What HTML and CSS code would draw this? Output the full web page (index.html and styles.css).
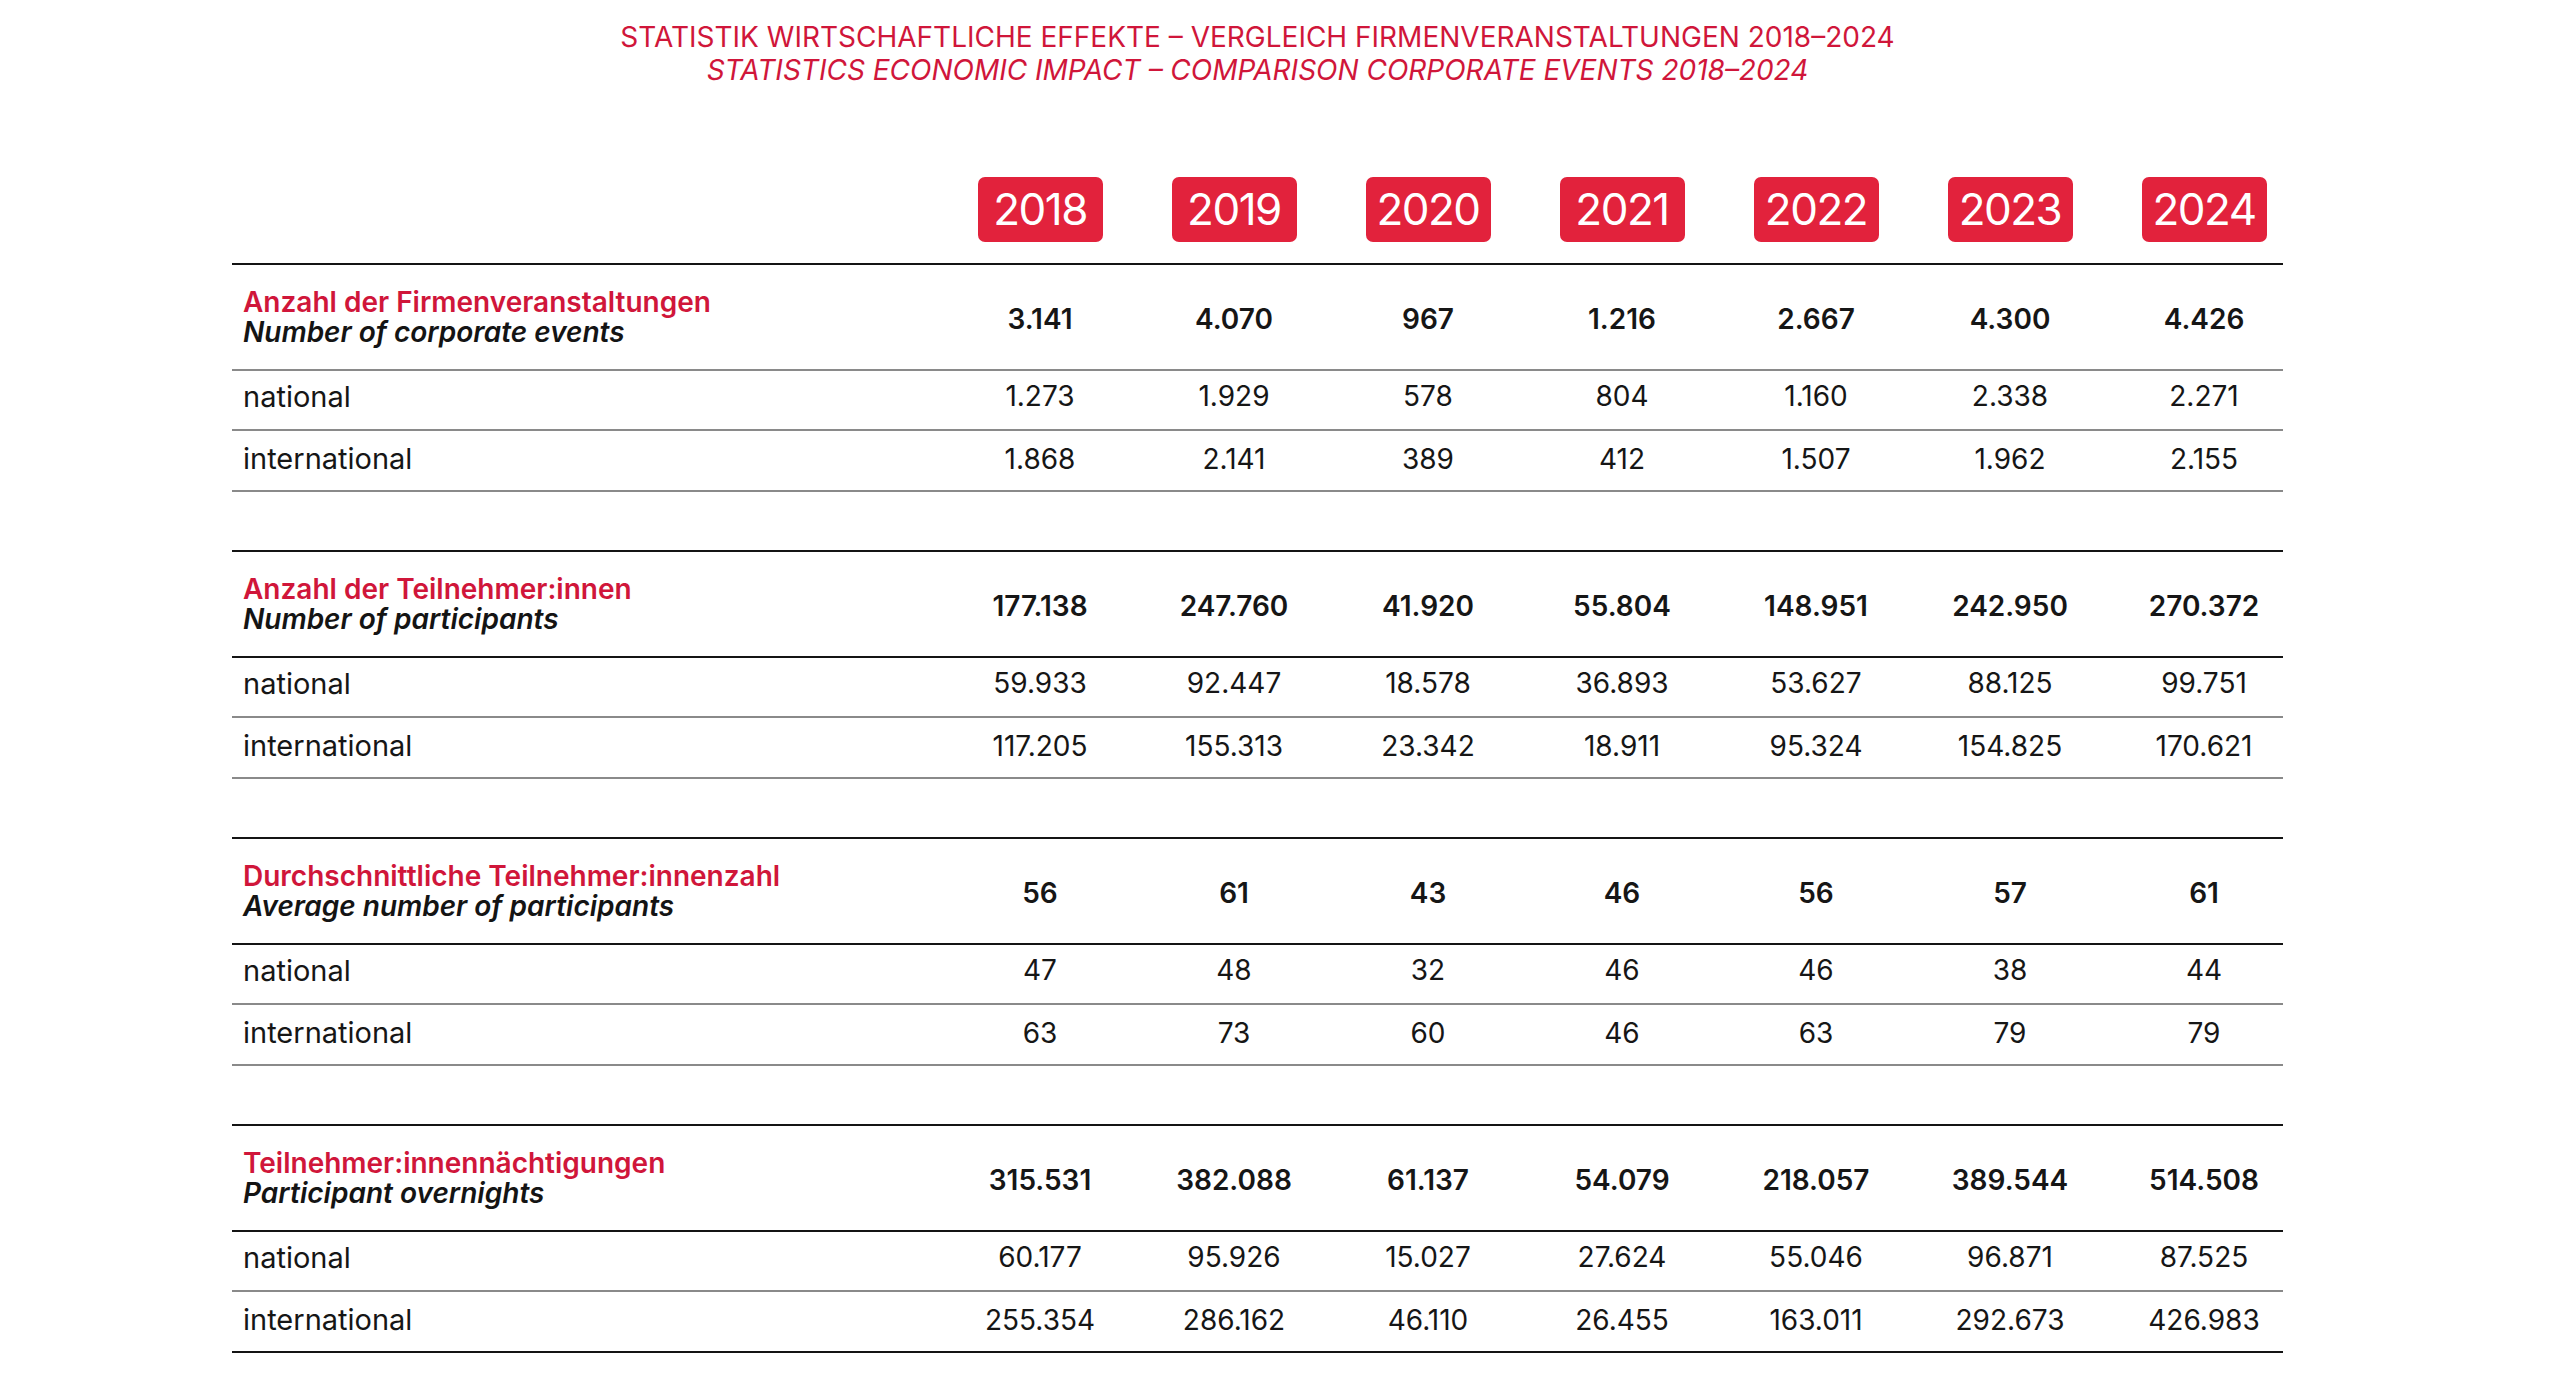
FILE: index.html
```html
<!DOCTYPE html>
<html lang="de">
<head>
<meta charset="utf-8">
<title>Statistik wirtschaftliche Effekte</title>
<link rel="stylesheet" href="styles.css">
</head>
<body>
<div class="page">
  <header class="title">
    <div class="title-de">STATISTIK WIRTSCHAFTLICHE EFFEKTE – VERGLEICH FIRMENVERANSTALTUNGEN 2018–2024</div>
    <div class="title-en">STATISTICS ECONOMIC IMPACT – COMPARISON CORPORATE EVENTS 2018–2024</div>
  </header>

  <div class="grid years">
    <div></div>
    <div class="cell"><span class="badge">2018</span></div>
    <div class="cell"><span class="badge">2019</span></div>
    <div class="cell"><span class="badge">2020</span></div>
    <div class="cell"><span class="badge">2021</span></div>
    <div class="cell"><span class="badge">2022</span></div>
    <div class="cell"><span class="badge">2023</span></div>
    <div class="cell"><span class="badge">2024</span></div>
  </div>

  <section class="section first">
    <div class="grid row-head soft">
      <div class="label"><div class="de">Anzahl der Firmenveranstaltungen</div><div class="en">Number of corporate events</div></div>
      <div class="num">3.141</div><div class="num">4.070</div><div class="num">967</div><div class="num">1.216</div><div class="num">2.667</div><div class="num">4.300</div><div class="num">4.426</div>
    </div>
    <div class="grid row nat">
      <div class="label">national</div>
      <div class="num">1.273</div><div class="num">1.929</div><div class="num">578</div><div class="num">804</div><div class="num">1.160</div><div class="num">2.338</div><div class="num">2.271</div>
    </div>
    <div class="grid row intl">
      <div class="label">international</div>
      <div class="num">1.868</div><div class="num">2.141</div><div class="num">389</div><div class="num">412</div><div class="num">1.507</div><div class="num">1.962</div><div class="num">2.155</div>
    </div>
  </section>

  <section class="section">
    <div class="grid row-head">
      <div class="label"><div class="de">Anzahl der Teilnehmer:innen</div><div class="en">Number of participants</div></div>
      <div class="num">177.138</div><div class="num">247.760</div><div class="num">41.920</div><div class="num">55.804</div><div class="num">148.951</div><div class="num">242.950</div><div class="num">270.372</div>
    </div>
    <div class="grid row nat">
      <div class="label">national</div>
      <div class="num">59.933</div><div class="num">92.447</div><div class="num">18.578</div><div class="num">36.893</div><div class="num">53.627</div><div class="num">88.125</div><div class="num">99.751</div>
    </div>
    <div class="grid row intl">
      <div class="label">international</div>
      <div class="num">117.205</div><div class="num">155.313</div><div class="num">23.342</div><div class="num">18.911</div><div class="num">95.324</div><div class="num">154.825</div><div class="num">170.621</div>
    </div>
  </section>

  <section class="section">
    <div class="grid row-head">
      <div class="label"><div class="de">Durchschnittliche Teilnehmer:innenzahl</div><div class="en">Average number of participants</div></div>
      <div class="num">56</div><div class="num">61</div><div class="num">43</div><div class="num">46</div><div class="num">56</div><div class="num">57</div><div class="num">61</div>
    </div>
    <div class="grid row nat">
      <div class="label">national</div>
      <div class="num">47</div><div class="num">48</div><div class="num">32</div><div class="num">46</div><div class="num">46</div><div class="num">38</div><div class="num">44</div>
    </div>
    <div class="grid row intl">
      <div class="label">international</div>
      <div class="num">63</div><div class="num">73</div><div class="num">60</div><div class="num">46</div><div class="num">63</div><div class="num">79</div><div class="num">79</div>
    </div>
  </section>

  <section class="section last">
    <div class="grid row-head">
      <div class="label"><div class="de">Teilnehmer:innennächtigungen</div><div class="en">Participant overnights</div></div>
      <div class="num">315.531</div><div class="num">382.088</div><div class="num">61.137</div><div class="num">54.079</div><div class="num">218.057</div><div class="num">389.544</div><div class="num">514.508</div>
    </div>
    <div class="grid row nat">
      <div class="label">national</div>
      <div class="num">60.177</div><div class="num">95.926</div><div class="num">15.027</div><div class="num">27.624</div><div class="num">55.046</div><div class="num">96.871</div><div class="num">87.525</div>
    </div>
    <div class="grid row intl">
      <div class="label">international</div>
      <div class="num">255.354</div><div class="num">286.162</div><div class="num">46.110</div><div class="num">26.455</div><div class="num">163.011</div><div class="num">292.673</div><div class="num">426.983</div>
    </div>
  </section>
</div>
</body>
</html>
```

FILE: styles.css
```css
html, body {
  margin: 0;
  padding: 0;
  background: #ffffff;
}

body {
  font-family: Inter, "Liberation Sans", Arial, sans-serif;
  color: #161616;
}

.page {
  width: 2051px;
  margin-left: 232px;
}

.title {
  padding-top: 21px;
  text-align: center;
  color: #d0163a;
  font-size: 28px;
  line-height: 33px;
  font-weight: 400;
}

.title-en {
  font-style: italic;
}

.grid {
  display: grid;
  grid-template-columns: 711px repeat(6, 194px) 176px;
  align-items: center;
}

.grid > :last-child {
  padding-left: 18px;
}

.years {
  margin-top: 90px;
  padding-bottom: 21px;
}

.cell {
  display: flex;
  justify-content: center;
}

.badge {
  display: inline-block;
  width: 125px;
  height: 65px;
  line-height: 65px;
  border-radius: 7px;
  background: #e2223c;
  color: #ffffff;
  font-size: 44px;
  text-align: center;
  letter-spacing: -1.5px;
}

.section {
  border-top: 2px solid #141414;
  margin-top: 58px;
}

.section.first {
  margin-top: 0;
}

.row-head {
  height: 104px;
  border-bottom: 2px solid #141414;
}

.row-head.soft {
  border-bottom-color: #8a8a8a;
}

.row {
  border-bottom: 2px solid #8a8a8a;
  box-sizing: border-box;
}

.row.nat {
  height: 60px;
  padding-bottom: 8px;
}

.row.intl {
  height: 61px;
  padding-bottom: 4px;
}

.section.last .row.intl {
  border-bottom-color: #141414;
}

.label {
  padding-left: 11px;
  font-size: 29px;
}

.row-head .label {
  font-size: 28px;
  line-height: 30px;
  font-weight: 600;
}

.label .de {
  color: #d0163a;
}

.label .en {
  font-style: italic;
  color: #141414;
}

.num {
  text-align: center;
  font-size: 28px;
}

.row-head .num {
  font-weight: 600;
  font-size: 28px;
  padding-top: 4px;
}
```
